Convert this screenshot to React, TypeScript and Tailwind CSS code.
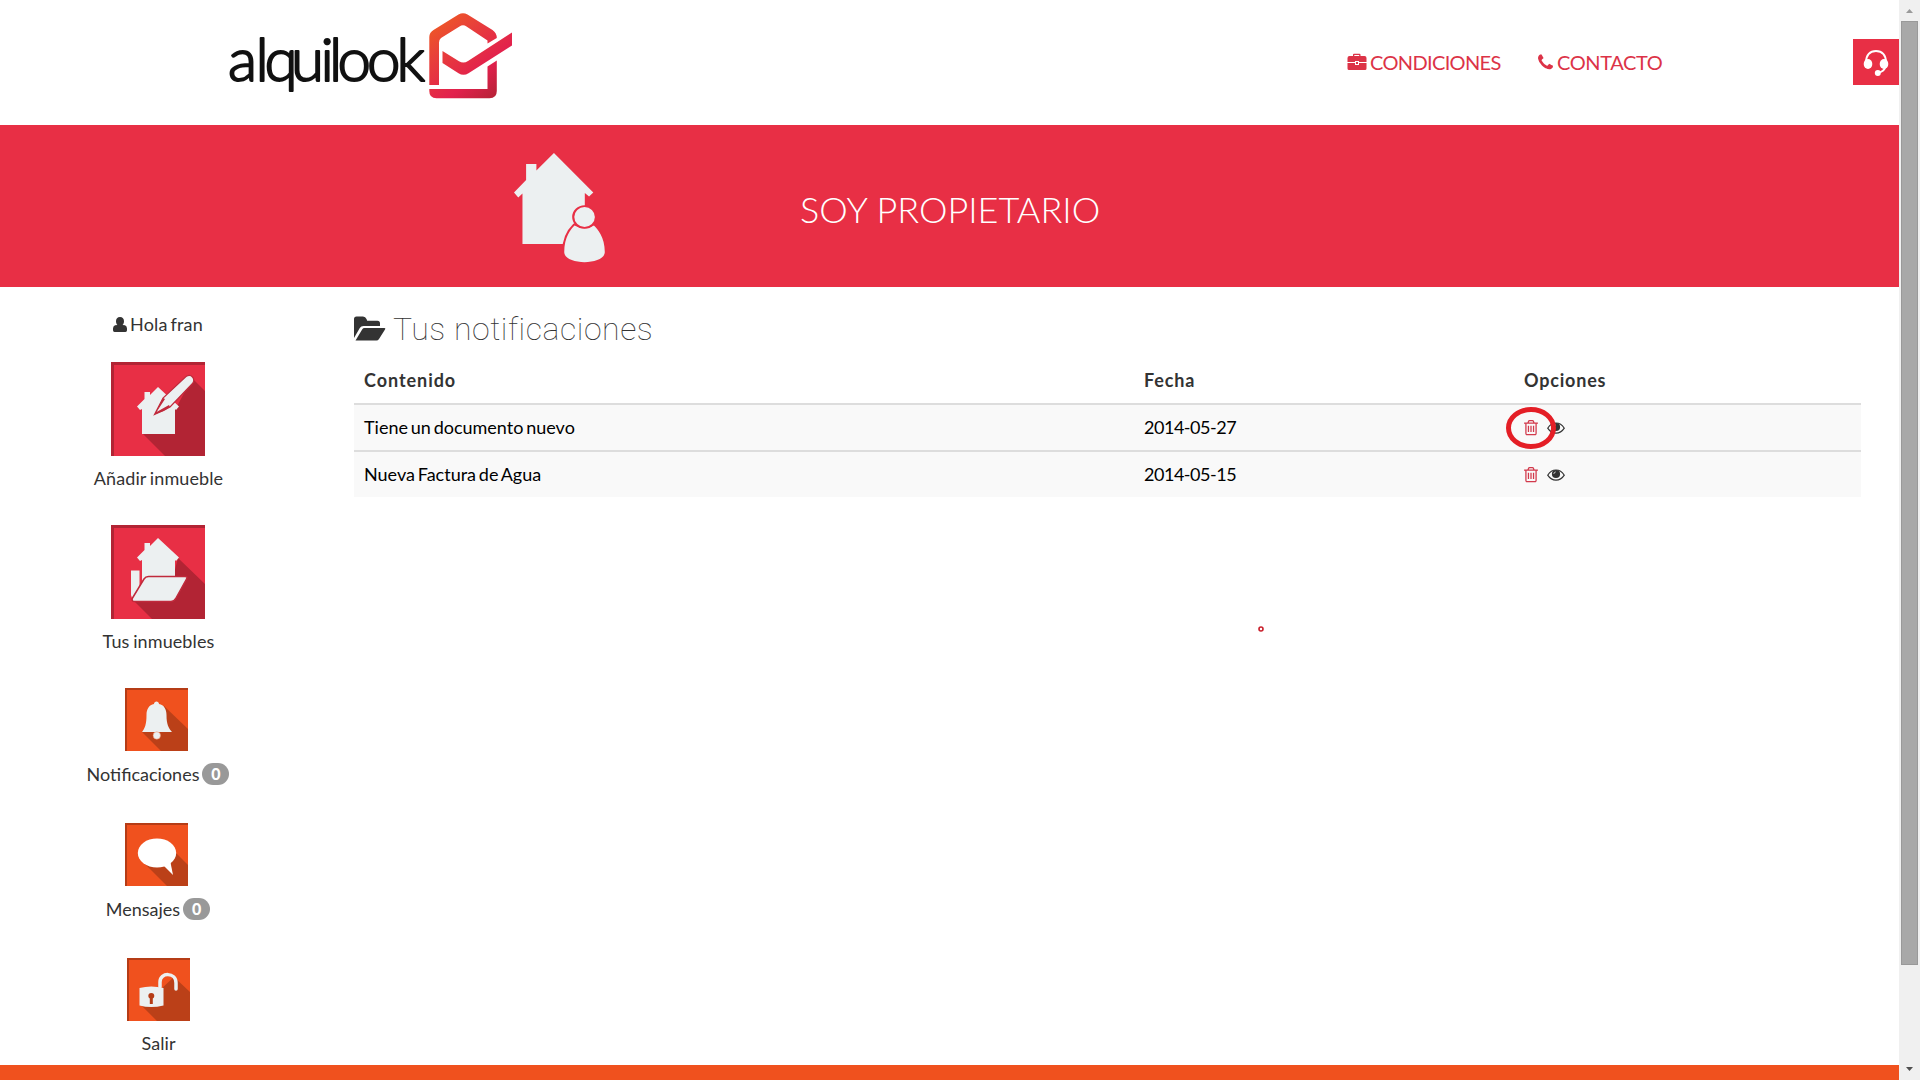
import React from 'react';

const LATO = "font-['Lato',sans-serif]";

function Logo() {
  return (
    <svg className="block" width="300" height="124" viewBox="0 0 300 124">
      <defs>
        <linearGradient id="brand" gradientUnits="userSpaceOnUse" x1="212" y1="20" x2="276" y2="98">
          <stop offset="0" stopColor="#ef5a22" />
          <stop offset="0.3" stopColor="#e8403a" />
          <stop offset="0.7" stopColor="#e2204d" />
          <stop offset="1" stopColor="#b52236" />
        </linearGradient>
      </defs>
      <text
        x="8 35.500 44.500 71 100.500 109 117.500 147 176.500"
        y="80.800"
        fontFamily="Lato, sans-serif"
        fontSize="60"
        fontWeight="300"
        fill="#111"
        stroke="#111"
        strokeWidth="2"
        strokeLinejoin="round"
      >
        alquilook
      </text>
      <path
        fill="url(#brand)"
        d="M209.3 85V37Q209.3 32.500 213.500 30L238.500 14.500Q243 11.800 247.500 14.500L272.500 30Q276.800 33 276.800 38L267.500 43.500V40.500L246.500 26.500Q243 24 239.500 26.500L221 38Q219 39.500 219 42.500V85Z"
      />
      <path fill="url(#brand)" d="M209.300 89H267.500V66.500L276.800 60.500V91Q276.800 98.300 269.500 98.300H216.500Q209.300 98.300 209.300 91Z" />
      <path fill="url(#brand)" d="M222.500 51L239 61.300Q243.500 64 248 61L292 32.500V45.500L248.500 73.200Q243.500 76.200 238.500 73.200L222.500 63Z" />
    </svg>
  );
}

function Briefcase() {
  return (
    <svg width="20" height="18" viewBox="0 0 20 18" fill="#dc3347">
      <path fillRule="evenodd" d="M6 3V1.800Q6 .8 7 .8H12.500Q13.500.8 13.500 1.800V3H17.500Q19.500 3 19.500 5V9H12V8H8V9H.5V5Q.5 3 2.500 3ZM7.300 3H12.200V2H7.300Z" />
      <path d="M.5 10H8V12H12V10H19.500V15.500Q19.500 17 18 17H2Q.5 17 .5 15.500Z" />
      <path d="M9 9H11V11H9Z" />
    </svg>
  );
}

function Phone() {
  return (
    <svg className="relative top-px" width="15" height="19" viewBox="0 0 1408 1792" fill="#dc3347">
      <path d="M1408 1240q0 27-10 70.500t-21 68.500q-21 50-122 106-94 51-186 51-27 0-53-3.500t-57.500-12.500-47-14.500-55.500-20.500-49-18q-98-35-175-83-127-79-264-216t-216-264q-48-77-83-175-3-9-18-49t-20.500-55.500-14.500-47-12.500-57.500-3.500-53q0-92 51-186 56-101 106-122 25-11 68.500-21t70.500-10q14 0 21 3 18 6 53 76 11 19 30 54t35 63.500 31 53.500q3 4 17.500 25t21.500 35.500 7 28.500q0 20-28.500 50t-62 55-62 53-28.500 46q0 9 5 22.500t8.500 20.500 14 24 11.500 19q76 137 174 235t235 174q2 1 19 11.500t24 14 20.500 8.500 22.500 5q18 0 46-28.500t53-62 55-62 50-28.500q14 0 28.500 7t35.500 21.500 25 17.500q25 15 53.500 31t63.500 35 54 30q70 35 76 53 3 7 3 21z" />
    </svg>
  );
}

function Headset() {
  return (
    <svg className="relative top-px" width="26" height="28" viewBox="0 0 26 28">
      <path d="M3 13.500C3 6 7 2 13 2S23 6 23 13.500" fill="none" stroke="#fff" strokeWidth="2" />
      <ellipse cx="5" cy="15" rx="4.300" ry="5" fill="#fff" />
      <ellipse cx="21" cy="15" rx="4.300" ry="5" fill="#fff" />
      <path d="M22.500 18Q21 22.500 15 24" fill="none" stroke="#fff" strokeWidth="1.800" />
      <ellipse cx="14.800" cy="24" rx="3" ry="3" fill="#fff" />
    </svg>
  );
}

function Trash() {
  return (
    <svg className="relative -top-px" width="14" height="18" viewBox="0 0 1408 1792" fill="#d23a4c">
      <path d="M512 800v576q0 14-9 23t-23 9h-64q-14 0-23-9t-9-23v-576q0-14 9-23t23-9h64q14 0 23 9t9 23zm256 0v576q0 14-9 23t-23 9h-64q-14 0-23-9t-9-23v-576q0-14 9-23t23-9h64q14 0 23 9t9 23zm256 0v576q0 14-9 23t-23 9h-64q-14 0-23-9t-9-23v-576q0-14 9-23t23-9h64q14 0 23 9t9 23zm128 724v-948h-896v948q0 22 7 40.500t14.500 27 10.500 8.500h832q3 0 10.500-8.500t14.500-27 7-40.500zm-672-1076h448l-48-117q-7-9-17-11h-317q-10 2-17 11zm928 32v64q0 14-9 23t-23 9h-96v948q0 83-47 143.500t-113 60.500h-832q-66 0-113-58.500t-47-141.500v-952h-96q-14 0-23-9t-9-23v-64q0-14 9-23t23-9h309l70-167q15-37 54-63t79-26h320q40 0 79 26t54 63l70 167h309q14 0 23 9t9 23z" />
    </svg>
  );
}

function Eye() {
  return (
    <svg width="18" height="12" viewBox="0 0 18 12">
      <path d="M.7 6.200Q4 1 9 1T17.300 6.200Q14 11.200 9 11.200T.7 6.200Z" fill="none" stroke="#333" strokeWidth="1.200" />
      <circle cx="9" cy="5" r="4.100" fill="#333" />
      <path d="M6.800 5Q6.900 3 8.800 2.900" fill="none" stroke="#f9f9f9" strokeWidth="0.700" />
    </svg>
  );
}

function User() {
  return (
    <svg width="14" height="15" viewBox="0 0 14 15" fill="#333">
      <path d="M7 0C9.600 0 11 1.700 11 4.200C11 6 10.300 7.400 9.500 8L12 8.300Q14 9 14 11.500V13.200Q14 15 12.500 15H1.500Q0 15 0 13.200V11.500Q0 9 2 8.300L4.500 8C3.700 7.400 3 6 3 4.200C3 1.700 4.400 0 7 0Z" />
    </svg>
  );
}

function FolderOpen() {
  return (
    <svg className="relative -top-px" width="32" height="25" viewBox="0 0 32 25" fill="#333">
      <path d="M0 22V3Q0 .5 2.500.5H9Q11.500.5 12.500 3L13.200 4.800H23.500Q26 4.800 26 7.300V10H9.500Q7 10 5.800 12Z" />
      <path d="M1.500 24.500L8.300 13.200Q9 12 10.500 12H30.500Q32 12 31 13.500L25 23Q24 24.500 22.500 24.500Z" />
    </svg>
  );
}

function HouseOwner() {
  return (
    <svg className="block" width="92" height="110" viewBox="0 0 76 110" preserveAspectRatio="none" fill="#ecf0f1">
      <path d="M0 39.500L10 27V11H18.500V17.500L33 0L65.500 39.500L62 43.500L58.500 40V91H7V40.500L3.500 44.500Z" />
      <g stroke="#e82f45" strokeWidth="3.500" paintOrder="stroke">
        <path d="M50 72.500C47 76 41.500 84 41.500 99C41.500 112.500 75 112.500 75 99C75 84 69 76 66 72.500Q58 78 50 72.500Z" />
        <ellipse cx="58.300" cy="64" rx="8.500" ry="10" />
      </g>
    </svg>
  );
}

function Tile({ orange, children }: { orange?: boolean; children: React.ReactNode }) {
  return (
    <svg className={orange ? 'block size-[63px]' : 'block size-[94px]'} viewBox={orange ? '0 0 63 63' : '0 0 94 94'}>
      <rect width="94" height="94" fill={orange ? '#f0511e' : '#e82f45'} />
      {children}
      <path d={orange ? 'M1 63V1H63' : 'M1.500 94V1.500H94'} fill="none" stroke={orange ? '#b53c16' : '#b22434'} strokeWidth={orange ? 2 : 3} />
    </svg>
  );
}

const HOUSE = 'M0 19.500L7.500 12V5H13V8L21 0L42 19.500L39 23L38 22V47H5V22L3 23Z';

const AddIcon = () => (
  <Tile>
    <path d="M31 71L54 94H94V29L81 16L63 50Z" fill="#b22434" />
    <g fill="#ecf0f1">
      <path transform="translate(26 25)" d={HOUSE} />
      <path stroke="#c02a3c" strokeWidth="1.200" d="M43.500 52.500L52 36L75 14.500Q79 12 81.500 15Q84 18 81.500 21.500L59 45Q54 48 43.500 52.500Z" />
    </g>
    <path d="M43.500 52.500L52 36L54 37L45.500 50L58 43L59 45Q53 49 43.500 52.500Z" fill="#c02a3c" />
  </Tile>
);

const HomesIcon = () => (
  <Tile>
    <path d="M23 76L41 94H94V59L67 33L60 60Z" fill="#b22434" />
    <g fill="#ecf0f1">
      <path transform="translate(26 13)" d={HOUSE} />
      <path d="M20 45.500H28.500V62L21.500 74.500L20 70Z" />
      <path stroke="#c02a3c" strokeWidth="1.500" d="M21.500 73L33 54Q34.500 51.500 37.500 51.500H74Q77 51.500 75.500 54L65 73Q63 76.500 60 76.500H24Q20 76.500 21.500 73Z" />
    </g>
  </Tile>
);

const BellIcon = () => (
  <Tile orange>
    <path d="M17 44L36 63H63V41L39 18Z" fill="#bb4018" />
    <g fill="#ecf0f1">
      <path d="M29 16C29 12.500 34 12.500 34 16C39 17 41.500 21 41.500 27C41.500 36 43.500 40 47 44H17C20 40 21.500 36 21.500 27C21.500 21 24 17 29 16Z" />
      <circle cx="31.800" cy="47.500" r="3.700" stroke="#f08a60" strokeWidth=".5" />
    </g>
  </Tile>
);

const ChatIcon = () => (
  <Tile orange>
    <path d="M20 41L42 63H63V42L49 28Z" fill="#bb4018" />
    <ellipse cx="32" cy="30" rx="19.200" ry="14.500" fill="#fff" />
    <path d="M38 42L48 52L45 37Z" fill="#fff" />
  </Tile>
);

const LockIcon = () => (
  <Tile orange>
    <path d="M14 47L30 63H63V34L47 19L34 31Z" fill="#bb4018" />
    <path d="M33 29V24C33 14 49 14 49 25V31" fill="none" stroke="#ecf0f1" strokeWidth="3.500" strokeLinecap="round" />
    <path d="M12.500 30Q24 27 36.500 30V47.500Q24 50.500 12.500 47.500Z" fill="#ecf0f1" />
    <path d="M24.300 35Q27.300 35 27.300 38Q27.300 39.800 25.800 40.600V46H22.800V40.600Q21.300 39.800 21.300 38Q21.300 35 24.300 35Z" fill="#b53c16" />
  </Tile>
);

function Badge() {
  return (
    <span className="ml-[3px] inline-flex h-[22px] w-[27px] items-center justify-center rounded-full bg-[#999] text-[16px] font-black leading-none text-white">
      0
    </span>
  );
}

function MenuItem({ icon, label, badge, className }: { icon: React.ReactNode; label: string; badge?: boolean; className: string }) {
  return (
    <a className={'flex flex-col items-center ' + className}>
      <span className={badge ? 'mr-[3px]' : ''}>{icon}</span>
      <span className={'flex h-7 items-center whitespace-nowrap ' + (badge ? 'mt-[9px]' : 'mt-2 pl-px [word-spacing:-1px] tracking-[0.1px]')}>
        {label}
        {badge && <Badge />}
      </span>
    </a>
  );
}

function Row({ text, date, marked }: { text: string; date: string; marked?: boolean }) {
  return (
    <div className="grid h-[47px] grid-cols-[780px_380px_1fr] items-center border-t-2 border-[#ddd] bg-[#f9f9f9] text-black">
      <span className="px-2.5 [word-spacing:-1.800px]">{text}</span>
      <span className="px-2.5 tracking-[-0.48px]">{date}</span>
      <span className="relative flex items-center gap-[9px] px-2.5">
        <Trash />
        <Eye />
        {marked && (
          <svg className="absolute -left-[8px] -top-[12px]" width="50" height="42" viewBox="0 0 50 42">
            <ellipse cx="25" cy="21" rx="22.500" ry="18.500" fill="none" stroke="#e41e26" strokeWidth="5" />
          </svg>
        )}
      </span>
    </div>
  );
}

export default function App() {
  return (
    <div className={'relative flex h-[1080px] w-[1920px] overflow-hidden bg-white text-[18px] text-[#333] ' + LATO}>
      <div className="flex w-[1899px] flex-col">
        <header className="flex h-[125px] justify-between pl-[220px]">
          <Logo />
          <nav className="flex h-[123px] items-center text-[20px] text-[#dc3347]">
            <a className="flex w-[191px] items-center gap-[3px]">
              <Briefcase />
              <span className="tracking-[-0.65px]">CONDICIONES</span>
            </a>
            <a className="flex w-[315px] items-center gap-[4px]">
              <Phone />
              <span className="tracking-[-0.4px]">CONTACTO</span>
            </a>
            <span className="flex size-[46px] items-center justify-center bg-[#e82f45]">
              <Headset />
            </span>
          </nav>
        </header>

        <section className="flex h-[162px] bg-[#e82f45] pl-[514px] pt-[28px]">
          <HouseOwner />
          <h1 className="ml-[194px] mt-[31px] whitespace-nowrap text-[36px] font-light leading-[50px] text-white">SOY PROPIETARIO</h1>
        </section>

        <main className="flex h-[778px]">
          <aside className="flex w-[316px] flex-col items-center">
            <div className="mt-[23px] flex h-7 items-center gap-[3px]">
              <User />
              <span className="tracking-[0.2px] [word-spacing:-2px]">Hola fran</span>
            </div>
            <MenuItem className="mt-[24px]" icon={<AddIcon />} label="Añadir inmueble" />
            <MenuItem className="mt-[33px]" icon={<HomesIcon />} label="Tus inmuebles" />
            <MenuItem className="mt-[33px]" icon={<BellIcon />} label="Notificaciones" badge />
            <MenuItem className="mt-[35px]" icon={<ChatIcon />} label="Mensajes" badge />
            <MenuItem className="mt-[35px]" icon={<LockIcon />} label="Salir" />
          </aside>

          <section className="ml-[38px] w-[1507px]">
            <h2 className="mt-[20px] flex h-[44px] items-center gap-[7px]">
              <FolderOpen />
              <span className="whitespace-nowrap font-['Roboto_Slab','Roboto',sans-serif] text-[32px] font-thin tracking-[0.550px]">Tus notificaciones</span>
            </h2>
            <div className="mt-[5px]">
              <div className="grid h-[47px] grid-cols-[780px_380px_1fr] items-center pt-[2px] font-bold">
                <span className="px-2.5 tracking-[0.950px]">Contenido</span>
                <span className="px-2.5 tracking-[0.850px]">Fecha</span>
                <span className="px-2.5 tracking-[0.8px]">Opciones</span>
              </div>
              <Row text="Tiene un documento nuevo" date="2014-05-27" marked />
              <Row text="Nueva Factura de Agua" date="2014-05-15" />
            </div>
          </section>
        </main>

        <footer className="h-[15px] bg-[#f0511e]" />
      </div>

      <div className="flex w-[21px] flex-col items-center bg-[#f0f0f0]">
        <svg className="block h-[21px] w-[21px]" viewBox="0 0 21 21">
          <path d="M7 13H14L10.500 9Z" fill="#9a9a9a" />
        </svg>
        <div className="h-[944px] w-[17px] border border-[#999] bg-[#a8a8a8]" />
        <svg className="mt-auto block h-[21px] w-[21px]" viewBox="0 0 21 21">
          <path d="M7 8H14L10.500 12Z" fill="#505050" />
        </svg>
      </div>

      <svg className="absolute left-[1258px] top-[626px]" width="6" height="6" viewBox="0 0 6 6">
        <circle cx="3" cy="3" r="2" fill="none" stroke="#c9202c" strokeWidth="1.600" />
      </svg>
    </div>
  );
}
